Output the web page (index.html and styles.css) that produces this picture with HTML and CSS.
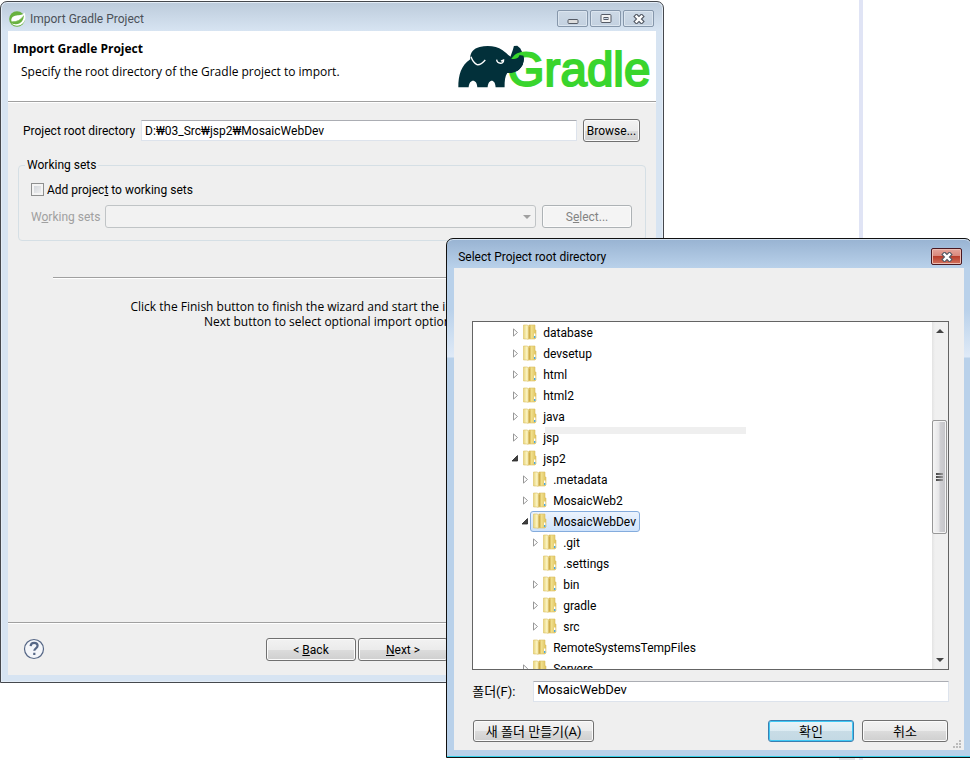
FILE: index.html
```html
<!DOCTYPE html>
<html lang="en">
<head>
<meta charset="utf-8">
<title>Import Gradle Project</title>
<link rel="stylesheet" href="styles.css">
</head>
<body>
<svg class="defs" aria-hidden="true">
  <defs>
    <linearGradient id="fold-l" x1="0" x2="1" y1="0" y2="0"><stop offset="0" stop-color="#e9d57a"/><stop offset=".5" stop-color="#fbf4c4"/><stop offset="1" stop-color="#e3ca6a"/></linearGradient>
    <linearGradient id="fold-r" x1="0" x2="1" y1="0" y2="0"><stop offset="0" stop-color="#cba945"/><stop offset=".35" stop-color="#f0df8c"/><stop offset="1" stop-color="#dfc25d"/></linearGradient>
  </defs>
  <symbol id="folder" viewBox="0 0 14 16">
    <path d="M6 1h6v5h1v8l-1 1H6z" fill="url(#fold-r)" stroke="#dcc163" stroke-width=".6"/>
    <path d="M.5 1H4l3 1.500V14L5 15.500 4 15H.5z" fill="url(#fold-l)" stroke="#dcc163" stroke-width=".6"/>
    <path d="M5.500 2.200 7 3v11l-1.500 1z" fill="#cfae4c"/>
    <path d="M11 9.500h1.400V14H11z" fill="#fff"/><path d="M11 12h1.400v2H11z" fill="#49a7e0"/>
  </symbol>
  <symbol id="closed" viewBox="0 0 8 9"><path d="M2.500 .9v7.200L6.500 4.500z" fill="#fff" stroke="#989898"/></symbol>
  <symbol id="open" viewBox="0 0 8 9"><path d="M6.500 1.500v5.500H1z" fill="#404040" stroke="#262626" stroke-width=".8"/></symbol>
  <symbol id="cross" viewBox="0 0 12 10"><path d="M3.500 2.500l5 5M8.500 2.500l-5 5" stroke="#555b66" stroke-width="4.600" stroke-linecap="square"/><path d="M3.500 2.500l5 5M8.500 2.500l-5 5" stroke="#fff" stroke-width="2.400" stroke-linecap="square"/></symbol>
</svg>
<main class="desktop">
  <div class="guide"></div>

  <section class="window wizard" aria-label="Import Gradle Project">
    <header class="titlebar">
      <svg class="app-icon" viewBox="0 0 17 16"><circle cx="8" cy="8" r="7.800" fill="#68b13e"/><path d="M15.500 1.500C14 4 11 4 7.500 4.500 3.500 5 1.600 7.500 2.600 10.500c5 .2 9-1 12.200-6.500C15 9 12 13 7 13.200c-2 .1-3.500-.4-4.600-.9 3 3.500 9 3 12-.6C17 8.500 16.700 5 15.500 1.500z" fill="#fff"/><path d="M3.500 10.700c4.500.2 8-1.500 10.300-5" stroke="#8bc267" fill="none" stroke-width=".7"/></svg>
      <span class="caption">Import Gradle Project</span>
      <div class="controls">
        <button class="ctl" aria-label="Minimize"><svg width="12" height="10" viewBox="0 0 12 10"><rect x="1" y="5.500" width="10" height="4" rx="1" fill="#ddd" stroke="#555b66"/></svg></button>
        <button class="ctl" aria-label="Maximize"><svg width="12" height="10" viewBox="0 0 12 10"><rect x="1" y=".5" width="10" height="8" rx="1" fill="#f3f3f3" stroke="#555b66"/><rect x="4" y="3.500" width="4" height="2" fill="#cbd8e6" stroke="#555b66"/></svg></button>
        <button class="ctl" aria-label="Close"><svg width="12" height="10"><use href="#cross"/></svg></button>
      </div>
    </header>
    <div class="client">
      <div class="banner">
        <div>
          <h1>Import Gradle Project</h1>
          <p>Specify the root directory of the Gradle project to import.</p>
        </div>
        <svg class="logo" viewBox="54 132 580 132" role="img" aria-label="Gradle">
          <path d="M219 149l3-11 10-1 9 8 10 20 1 12-4 18-12 15-20 8-22 1z" fill="#02303a"/>
          <path d="M55 262c0-35 8-66 36-84-2-18 8-32 28-37 26-6 52-2 68 9 16 11 24 24 38 25 8-1 11-5 12-12l13 3c3 18-2 32-14 43-10 7-22 11-34 10-7 10-8 24-8 43h-27c-1-26-22-26-24 0h-31c-1-26-24-26-26 0z" fill="#02303a"/>
          <path class="ear" d="M93 170c4 11 11 20 18 24 10 2 16-4 25-14"/>
          <path class="ear" d="M170 179c2 14 22 14 21 1l-8 3"/>
          <text x="203" y="258">Gradle</text>
          <path d="M200 174c10 3 18 4 26 2 8-1 11-5 13-11l12 2c3 18-2 31-14 42-10 7-22 11-34 10z" fill="#02303a"/>
        </svg>
      </div>
      <div class="page">
        <div class="path-row">
          <label for="root">Project root directory</label>
          <input id="root" class="field" type="text" value="D:₩03_Src₩jsp2₩MosaicWebDev">
          <button class="btn browse">Browse...</button>
        </div>
        <fieldset class="group">
          <legend>Working sets</legend>
          <div class="check-row">
            <input type="checkbox" id="add"><label for="add">Add projec<u>t</u> to working sets</label>
          </div>
          <div class="set-row">
            <label for="sets">W<u>o</u>rking sets</label>
            <div class="combo"><select id="sets" disabled><option></option></select></div>
            <button class="btn" disabled>S<u>e</u>lect...</button>
          </div>
        </fieldset>
        <hr class="rule">
        <p class="hint">Click the Finish button to finish the wizard and start the import. Click the<br>Next button to select optional import options.</p>
      </div>
      <footer class="actions">
        <button class="help" aria-label="Help"><svg width="22" height="22" viewBox="0 0 22 22"><circle cx="11" cy="11" r="9.500" fill="#f4f6fa" stroke="#566786" stroke-width="1.200"/><path d="M7.600 8.200c.2-2.300 1.600-3.400 3.500-3.400 2.100 0 3.500 1.200 3.500 2.900 0 2.600-3.300 2.600-3.300 5.100M11.300 14.800v2.200" fill="none" stroke="#566786" stroke-width="2.200"/></svg></button>
        <button class="btn">&lt; <u>B</u>ack</button>
        <button class="btn"><u>N</u>ext &gt;</button>
      </footer>
    </div>
  </section>

  <section class="window picker" aria-label="Select Project root directory">
    <header class="titlebar">
      <span class="caption">Select Project root directory</span>
      <button class="ctl danger" aria-label="Close"><svg width="12" height="10"><use href="#cross"/></svg></button>
    </header>
    <div class="client">
      <div class="tree-box">
        <ul class="tree">
          <li class="d0"><svg class="tw"><use href="#closed"/></svg><span class="node"><svg><use href="#folder"/></svg>database</span></li>
          <li class="d0"><svg class="tw"><use href="#closed"/></svg><span class="node"><svg><use href="#folder"/></svg>devsetup</span></li>
          <li class="d0"><svg class="tw"><use href="#closed"/></svg><span class="node"><svg><use href="#folder"/></svg>html</span></li>
          <li class="d0"><svg class="tw"><use href="#closed"/></svg><span class="node"><svg><use href="#folder"/></svg>html2</span></li>
          <li class="d0"><svg class="tw"><use href="#closed"/></svg><span class="node"><svg><use href="#folder"/></svg>java</span></li>
          <li class="d0 masked"><svg class="tw"><use href="#closed"/></svg><span class="node"><svg><use href="#folder"/></svg>jsp</span></li>
          <li class="d0"><svg class="tw"><use href="#open"/></svg><span class="node"><svg><use href="#folder"/></svg>jsp2</span></li>
          <li class="d1"><svg class="tw"><use href="#closed"/></svg><span class="node"><svg><use href="#folder"/></svg>.metadata</span></li>
          <li class="d1"><svg class="tw"><use href="#closed"/></svg><span class="node"><svg><use href="#folder"/></svg>MosaicWeb2</span></li>
          <li class="d1"><svg class="tw"><use href="#open"/></svg><span class="node selected"><svg><use href="#folder"/></svg>MosaicWebDev</span></li>
          <li class="d2"><svg class="tw"><use href="#closed"/></svg><span class="node"><svg><use href="#folder"/></svg>.git</span></li>
          <li class="d2"><svg class="tw"></svg><span class="node"><svg><use href="#folder"/></svg>.settings</span></li>
          <li class="d2"><svg class="tw"><use href="#closed"/></svg><span class="node"><svg><use href="#folder"/></svg>bin</span></li>
          <li class="d2"><svg class="tw"><use href="#closed"/></svg><span class="node"><svg><use href="#folder"/></svg>gradle</span></li>
          <li class="d2"><svg class="tw"><use href="#closed"/></svg><span class="node"><svg><use href="#folder"/></svg>src</span></li>
          <li class="d1"><svg class="tw"></svg><span class="node"><svg><use href="#folder"/></svg>RemoteSystemsTempFiles</span></li>
          <li class="d1"><svg class="tw"><use href="#closed"/></svg><span class="node"><svg><use href="#folder"/></svg>Servers</span></li>
        </ul>
        <div class="scrollbar">
          <svg width="16" height="18" viewBox="0 0 16 18"><path d="M4 11l4-4 4 4z" fill="#444"/></svg>
          <div class="track"><div class="thumb"><i></i><i></i><i></i></div></div>
          <svg width="16" height="18" viewBox="0 0 16 18"><path d="M4 7l4 4 4-4z" fill="#444"/></svg>
        </div>
      </div>
      <div class="name-row">
        <label for="folder-name">폴더(F):</label>
        <input id="folder-name" class="field" type="text" value="MosaicWebDev">
      </div>
      <div class="buttons">
        <button class="btn make">새 폴더 만들기(A)</button>
        <button class="btn primary">확인</button>
        <button class="btn">취소</button>
      </div>
      <svg class="grip" width="9" height="9" viewBox="0 0 9 9"><path d="M6 0h2v2H6zM3 3h2v2H3zM6 3h2v2H6zM0 6h2v2H0zM3 6h2v2H3zM6 6h2v2H6z" fill="#bcbcbc"/></svg>
    </div>
  </section>
</main>
</body>
</html>
```

FILE: styles.css
```css
* { box-sizing: border-box; }

body {
  margin: 0;
  background: #fff;
  color: #000;
  font: 12px/15px Roboto, "Noto Sans CJK KR", sans-serif;
}

button, input, select { font: inherit; color: inherit; }
button { padding: 0; }
h1, p, ul { margin: 0; padding: 0; }
svg { display: block; flex: none; }
.defs { position: absolute; width: 0; height: 0; }

.desktop {
  position: relative;
  min-height: 100vh;
  overflow: hidden;
}

.guide {
  position: absolute;
  top: 0;
  bottom: 0;
  left: 859px;
  width: 4px;
  background: #e0e4f5;
}

.guide::before {
  position: absolute;
  right: 8px;
  bottom: 0;
  width: 16px;
  height: 2px;
  background: #e4e4e8;
  content: "";
}

/* Window frames */
.window {
  position: absolute;
  display: flex;
  flex-direction: column;
  padding: 0 7px 7px;
  border: 1px solid #45484d;
  border-radius: 7px 7px 0 0;
}

.wizard {
  top: 1px;
  bottom: 77px;
  left: 0;
  width: 664px;
  max-width: 100%;
  background: linear-gradient(#bccbdb, #d7e4f2 29px);
  box-shadow: inset 0 0 0 1px #e4edf7;
}

.picker {
  top: 238px;
  right: -2px;
  bottom: 2px;
  left: 46%;
  border-color: #111;
  background: linear-gradient(#98b3d2, #b9d1ea 29px, #b9d1ea 70px, #dfeaf7 118px, #b9d1ea 119px);
  box-shadow: inset 0 -1px #35cfe8, inset 0 1px #d5e3f2;
}

.titlebar {
  display: flex;
  flex: none;
  align-items: center;
  height: 29px;
}

.wizard .titlebar { padding: 4px 2px 0 1px; color: #4b5159; }
.picker .titlebar { padding: 6px 2px 0 4px; }
.caption { flex: 1; padding-top: 2px; }
.app-icon { width: 17px; height: 16px; margin-right: 4px; }
.controls { display: flex; gap: 2px; }

.ctl {
  display: grid;
  place-items: center;
  width: 31px;
  height: 17px;
  border: 1px solid #8697ab;
  border-radius: 2px;
  background: linear-gradient(#cdd9e6, #c3d1e0);
  box-shadow: inset 0 0 0 1px #dbe5ef;
}

.danger {
  border-color: #4a1820;
  background: linear-gradient(#e5a59b, #d9867a 48%, #b93e2c 50%, #d3735f);
  box-shadow: inset 0 0 0 1px #ecbcb2;
}

.client {
  display: flex;
  flex: 1;
  flex-direction: column;
  min-height: 0;
  background: #efefef;
}

/* Wizard */
.banner {
  display: flex;
  justify-content: space-between;
  height: 71px;
  padding: 9px 5px 0;
  border-bottom: 1px solid #a0a0a0;
  background: #fff;
}

h1 { font: bold 12px/18px "Open Sans", sans-serif; }
.banner p { margin: 6px 0 0 8px; }
.banner p, .hint { font-family: "Open Sans", sans-serif; }
.logo { width: 193px; height: 44px; margin-top: 4px; overflow: visible; }

.logo text {
  fill: #39d52d;
  stroke: #39d52d;
  stroke-width: 6px;
  font: 143px "Liberation Sans", sans-serif;
}

.ear { fill: none; stroke: #fff; stroke-width: 4px; }

.page {
  flex: 1;
  padding: 16px 10px 0;
  border-top: 1px solid #fff;
}

label { padding-top: 2px; }

.path-row {
  display: flex;
  align-items: center;
  gap: 6px;
  padding: 0 6px 0 5px;
}

.field {
  flex: 1;
  min-width: 0;
  height: 21px;
  padding: 0 3px;
  border: 1px solid #dde3ec;
  border-top-color: #abadb3;
  background: #fff;
}

.btn {
  width: 90px;
  height: 23px;
  padding-top: 2px;
  border: 1px solid #707070;
  border-radius: 3px;
  background: linear-gradient(#f2f2f2, #ebebeb 50%, #dcdcdc 51%, #cfcfcf);
  box-shadow: inset 0 0 0 1px #fbfbfb;
}

.btn:disabled {
  border-color: #adb2b5;
  background: #f4f4f4;
  color: #838383;
}

.browse { width: 57px; }

.group {
  min-width: 0;
  height: 83px;
  margin: 16px 0 0;
  padding: 8px 13px 0 12px;
  border: 1px solid #d5dfe5;
  border-radius: 4px;
}

.group legend { margin-left: -6px; padding: 0 2px; }
.check-row { display: flex; align-items: center; gap: 3px; }

.check-row input {
  appearance: none;
  width: 13px;
  height: 13px;
  margin: 0;
  border: 1px solid #8e8f8f;
  background: linear-gradient(135deg, #cbcfd5, #f6f6f6);
  box-shadow: inset 0 0 0 2px #f4f4f4;
}

.set-row {
  display: flex;
  align-items: center;
  gap: 5px;
  margin-top: 7px;
  color: #a0a0a0;
}

.combo { position: relative; flex: 1; margin-right: 1px; }
.combo::after {
  position: absolute;
  top: 10px;
  right: 5px;
  border: 4px solid transparent;
  border-top-color: #a0a0a0;
  border-bottom: 0;
  content: "";
}

.combo select {
  display: block;
  appearance: none;
  width: 100%;
  height: 23px;
  border: 1px solid #adb2b5;
  border-radius: 3px;
  background: #f4f4f4;
}

.rule {
  height: 2px;
  margin: 36px 35px 0;
  border: 0;
  border-top: 1px solid #a0a0a0;
  background: #fff;
}

.hint { margin-top: 20px; text-align: center; white-space: nowrap; }

.actions {
  display: flex;
  align-items: center;
  gap: 2px;
  height: 53px;
  padding: 0 208px 0 15px;
  border-top: 1px solid #a0a0a0;
  box-shadow: inset 0 1px #fff;
}

.help { margin-right: auto; border: 0; background: none; }

/* Folder picker */
.picker .client { position: relative; padding: 53px 15px 8px 18px; }

.tree-box {
  position: relative;
  display: flex;
  flex: 1;
  min-height: 0;
  overflow: hidden;
  border: 1px solid #646464;
  background: #fff;
}

.tree { flex: 1; list-style: none; }
.tree li { display: flex; align-items: center; height: 21px; }
.tw { width: 8px; height: 9px; }
.d0 { padding-left: 38px; }
.d1 { padding-left: 48px; }
.d2 { padding-left: 58px; }

.node {
  display: flex;
  align-items: flex-start;
  gap: 6px;
  height: 21px;
  margin-left: 1px;
  padding: 0 3px 0 2px;
  border: 1px solid transparent;
  line-height: 21px;
}

.node svg { width: 14px; height: 16px; margin-top: 1px; }

.selected {
  border-color: #84acdd;
  border-radius: 3px;
  background: linear-gradient(#ebf3fd, #cfe3fc);
}

.masked { position: relative; }
.masked::after {
  position: absolute;
  top: 0;
  left: 72px;
  width: 201px;
  height: 7px;
  background: #efefef;
  content: "";
}

.scrollbar {
  display: flex;
  flex-direction: column;
  width: 16px;
  background: linear-gradient(90deg, #e3e3e3, #f0f0f0 3px);
}

.track { flex: 1; padding-top: 80px; }

.thumb {
  display: flex;
  flex-direction: column;
  align-items: center;
  justify-content: center;
  gap: 1px;
  width: 15px;
  height: 114px;
  border: 1px solid #979797;
  border-radius: 2px;
  background: linear-gradient(90deg, #f5f5f5, #e6e6e8 45%, #cfcfd2 55%, #c4c4c8);
  box-shadow: inset 0 0 0 1px #f4f4f4;
}

.thumb i { width: 7px; height: 2px; background: linear-gradient(90deg, #444, #999); }

.name-row {
  display: flex;
  align-items: center;
  margin-top: 11px;
  font-size: 13px;
}

.name-row label { width: 61px; padding-top: 0; }
.name-row .field { padding-bottom: 4px; }

.buttons {
  display: flex;
  gap: 8px;
  margin-top: 18px;
  padding: 0 1px;
  font-size: 13px;
}

.buttons .btn { width: 86px; height: 22px; padding-top: 0; }
.buttons .make { width: 121px; margin-right: auto; }

.buttons .primary {
  border-color: #3c7fb1;
  background: linear-gradient(#eaf4f8, #dcebf2 50%, #c8dce6 51%, #c3d9e4);
  box-shadow: inset 0 0 0 1px #3fc9f5;
}

.grip { position: absolute; right: 2px; bottom: 1px; }
```
